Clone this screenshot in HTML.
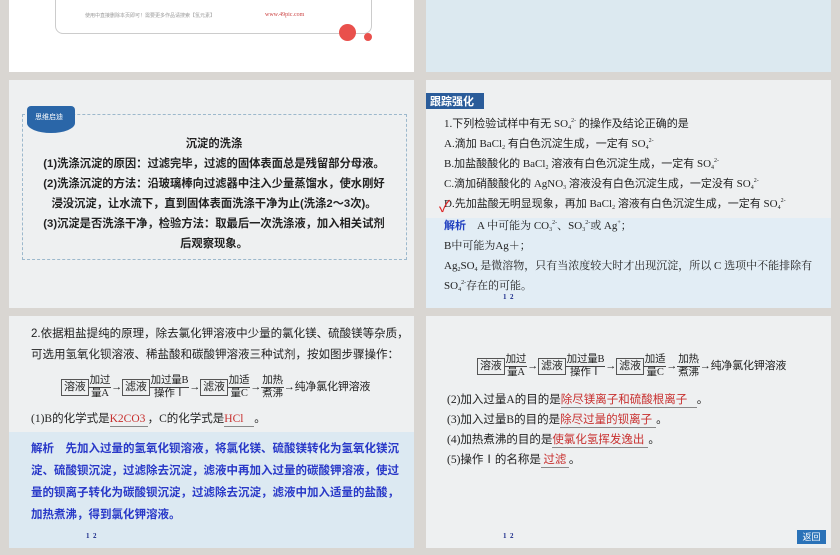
<!DOCTYPE html><html><head><meta charset="utf-8"><style>
body{margin:0;width:840px;height:555px;background:#d9d6d2;position:relative;overflow:hidden;font-family:"Liberation Serif","Noto Sans CJK SC",sans-serif;color:#222}
.s{position:absolute}
.t{position:absolute;white-space:nowrap;font-size:11.5px}
.b{font-weight:bold}
.box{display:inline-block;border:1px solid #555;padding:0 2px;line-height:15px}
.fr{display:inline-block;text-align:center;vertical-align:middle;font-size:10.5px;line-height:12px}
.fr span{display:block;border-bottom:1px solid #444;padding:0 1px}
.red{color:#c8302f}
.u{border-bottom:1px solid #888;display:inline-block;line-height:14px}
sub,sup{font-size:6px;line-height:0;vertical-align:baseline;position:relative}
sub{top:2px}sup{top:-5px}
.dg{font-size:11px;letter-spacing:-0.2px}
</style></head><body>
<div class="s" style="left:9px;top:0;width:405px;height:72px;background:#fff"></div>
<div class="s" style="left:55px;top:-10px;width:315px;height:42px;border:1px solid #ccc;border-radius:8px"></div>
<div class="t" style="left:85px;top:12px;font-size:5px;color:#999">使用中直接删除本页即可！需要更多作品请搜索【氢元素】</div>
<div class="t" style="left:265px;top:12px;font-size:6px;color:#c44">www.49pic.com</div>
<div class="s" style="left:339px;top:24px;width:17px;height:17px;border-radius:50%;background:#e9504c"></div>
<div class="s" style="left:364px;top:33px;width:8px;height:8px;border-radius:50%;background:#e9504c"></div>
<div class="s" style="left:426px;top:0;width:405px;height:72px;background:#dce9f0"></div>

<div class="s" style="left:9px;top:80px;width:405px;height:228px;background:#eef0f1"></div>
<div class="s" style="left:22px;top:114px;width:383px;height:144px;border:1px dashed #9cb8cc"></div>
<div class="s" style="left:27px;top:106px;width:48px;height:27px;background:#2a66a8;border-radius:4px 4px 24px 24px/4px 4px 10px 10px"></div>
<div class="t" style="left:35px;top:112px;font-size:7px;color:#fff">思维启迪</div>
<div class="s b" style="left:22px;top:134px;width:384px;text-align:center;font-size:11.3px;line-height:20px;font-family:'Liberation Sans','Noto Sans CJK SC',sans-serif">沉淀的洗涤<br>(1)洗涤沉淀的原因：过滤完毕，过滤的固体表面总是残留部分母液。<br>(2)洗涤沉淀的方法：沿玻璃棒向过滤器中注入少量蒸馏水，使水刚好<br>浸没沉淀，让水流下，直到固体表面洗涤干净为止(洗涤2～3次)。<br>(3)沉淀是否洗涤干净，检验方法：取最后一次洗涤液，加入相关试剂<br>后观察现象。</div>

<div class="s" style="left:426px;top:80px;width:405px;height:228px;background:#eef0f1"></div>
<div class="s" style="left:426px;top:218px;width:405px;height:90px;background:#e2edf5"></div>
<div class="s" style="left:426px;top:93px;width:58px;height:16px;background:#2a5c9a"></div>
<div class="t" style="left:430px;top:93px;color:#fff;font-size:11px;font-weight:bold">跟踪强化</div>
<div class="s" style="left:444px;top:114px;font-size:11px;line-height:20px;white-space:nowrap">1.下列检验试样中有无 SO<sub>4</sub><sup>2-</sup> 的操作及结论正确的是<br>A.滴加 BaCl<sub>2</sub> 有白色沉淀生成，一定有 SO<sub>4</sub><sup>2-</sup><br>B.加盐酸酸化的 BaCl<sub>2</sub> 溶液有白色沉淀生成，一定有 SO<sub>4</sub><sup>2-</sup><br>C.滴加硝酸酸化的 AgNO<sub>3</sub> 溶液没有白色沉淀生成，一定没有 SO<sub>4</sub><sup>2-</sup><br>D.先加盐酸无明显现象，再加 BaCl<sub>2</sub> 溶液有白色沉淀生成，一定有 SO<sub>4</sub><sup>2-</sup></div>
<div class="t" style="left:439px;top:193px;color:#d22;font-size:16px">✓</div>
<div class="s" style="left:444px;top:216px;font-size:11px;line-height:20px;white-space:nowrap;font-family:'Liberation Serif','Noto Serif CJK SC',serif"><b style="color:#2040c0;font-family:'Liberation Sans','Noto Sans CJK SC',sans-serif">解析</b>　A 中可能为 CO<sub>3</sub><sup>2-</sup>、SO<sub>3</sub><sup>2-</sup>或 Ag<sup>+</sup>；<br>B中可能为Ag＋；<br>Ag<sub>2</sub>SO<sub>4</sub> 是微溶物，只有当浓度较大时才出现沉淀，所以 C 选项中不能排除有<br>SO<sub>4</sub><sup>2-</sup>存在的可能。</div>
<div class="t" style="left:503px;top:293px;font-size:7px;color:#1a2a8a;font-weight:bold">1&nbsp; 2</div>

<div class="s" style="left:9px;top:316px;width:405px;height:232px;background:#eef0f1"></div>
<div class="s" style="left:9px;top:432px;width:405px;height:116px;background:#dce9f2"></div>
<div class="s" style="left:31px;top:324px;font-size:11.5px;line-height:21px;white-space:nowrap;font-family:'Liberation Sans','Noto Sans CJK SC',sans-serif">2.依据粗盐提纯的原理，除去氯化钾溶液中少量的氯化镁、硫酸镁等杂质，<br>可选用氢氧化钡溶液、稀盐酸和碳酸钾溶液三种试剂，按如图步骤操作：</div>
<div class="t dg" style="left:61px;top:375px"><span class="box">溶液</span><span class="fr"><span>加过</span>量A</span>→<span class="box">滤液</span><span class="fr"><span>加过量B</span>操作Ⅰ</span>→<span class="box">滤液</span><span class="fr"><span>加适</span>量C</span>→<span class="fr"><span>加热</span>煮沸</span>→纯净氯化钾溶液</div>
<div class="t" style="left:31px;top:410px;font-size:11.5px">(1)B的化学式是<span class="u red" style="width:38px">K2CO3</span>，C的化学式是<span class="u red" style="width:30px">HCl</span>。</div>
<div class="s b" style="left:31px;top:438px;font-size:11.5px;line-height:22px;white-space:nowrap;color:#2838c8;font-family:'Liberation Sans','Noto Sans CJK SC',sans-serif">解析　先加入过量的氢氧化钡溶液，将氯化镁、硫酸镁转化为氢氧化镁沉<br>淀、硫酸钡沉淀，过滤除去沉淀，滤液中再加入过量的碳酸钾溶液，使过<br>量的钡离子转化为碳酸钡沉淀，过滤除去沉淀，滤液中加入适量的盐酸，<br>加热煮沸，得到氯化钾溶液。</div>
<div class="t" style="left:86px;top:532px;font-size:7px;color:#1a2a8a;font-weight:bold">1&nbsp; 2</div>

<div class="s" style="left:426px;top:316px;width:405px;height:232px;background:#eef0f1"></div>
<div class="t dg" style="left:477px;top:354px"><span class="box">溶液</span><span class="fr"><span>加过</span>量A</span>→<span class="box">滤液</span><span class="fr"><span>加过量B</span>操作Ⅰ</span>→<span class="box">滤液</span><span class="fr"><span>加适</span>量C</span>→<span class="fr"><span>加热</span>煮沸</span>→纯净氯化钾溶液</div>
<div class="s" style="left:447px;top:390px;font-size:11.5px;line-height:20px;white-space:nowrap">(2)加入过量A的目的是<span class="u red" style="width:136px">除尽镁离子和硫酸根离子</span>。<br>(3)加入过量B的目的是<span class="u red" style="width:96px">除尽过量的钡离子</span>。<br>(4)加热煮沸的目的是<span class="u red" style="width:96px">使氯化氢挥发逸出</span>。<br>(5)操作Ⅰ的名称是<span class="u red" style="width:28px;text-align:center">过滤</span>。</div>
<div class="t" style="left:503px;top:532px;font-size:7px;color:#1a2a8a;font-weight:bold">1&nbsp; 2</div>
<div class="s" style="left:797px;top:530px;width:29px;height:14px;background:#2a72b8;color:#fff;font-size:9px;text-align:center;line-height:14px">返回</div>
</body></html>
